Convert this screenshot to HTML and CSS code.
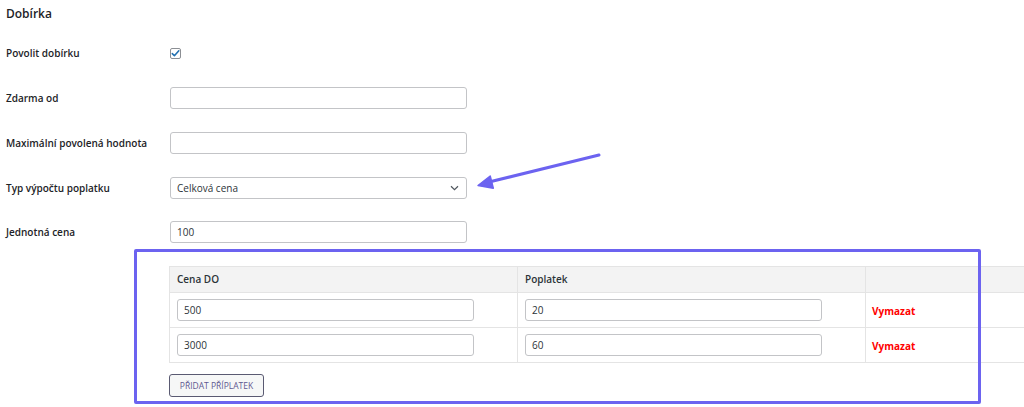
FILE: index.html
```html
<!DOCTYPE html>
<html lang="cs">
<head>
<meta charset="utf-8">
<title>Dobírka</title>
<link rel="stylesheet" href="styles.css">
</head>
<body>
<div class="page">
  <h2 class="title">Dobírka</h2>
  <div class="form">
    <div class="row">
      <label class="label">Povolit dobírku</label>
      <span class="checkbox">
        <svg width="11" height="11" viewBox="0 0 11 11"><path d="M2.3 5.6 L4.4 7.7 L8.8 2.8" fill="none" stroke="#2271b1" stroke-width="1.6" stroke-linecap="round" stroke-linejoin="round"/></svg>
      </span>
    </div>
    <div class="row">
      <label class="label">Zdarma od</label>
      <div class="input"></div>
    </div>
    <div class="row">
      <label class="label">Maximální povolená hodnota</label>
      <div class="input"></div>
    </div>
    <div class="row">
      <label class="label">Typ výpočtu poplatku</label>
      <div class="input select">
        <span>Celková cena</span>
        <svg class="chev" width="9" height="6" viewBox="0 0 9 6"><path d="M1 1.2 L4.5 4.6 L8 1.2" fill="none" stroke="#50575e" stroke-width="1.2"/></svg>
      </div>
    </div>
    <div class="row">
      <label class="label">Jednotná cena</label>
      <div class="input">100</div>
    </div>
  </div>

  <div class="fees">
    <table class="fee-table">
      <thead>
        <tr><th class="c1">Cena DO</th><th class="c2">Poplatek</th><th class="c3"></th></tr>
      </thead>
      <tbody>
        <tr>
          <td><div class="input cell-input">500</div></td>
          <td><div class="input cell-input">20</div></td>
          <td><span class="delete">Vymazat</span></td>
        </tr>
        <tr>
          <td><div class="input cell-input">3000</div></td>
          <td><div class="input cell-input">60</div></td>
          <td><span class="delete">Vymazat</span></td>
        </tr>
      </tbody>
    </table>
    <button class="add-btn">PŘIDAT PŘÍPLATEK</button>
  </div>
</div>

<div class="highlight"></div>
<svg class="arrow" width="1024" height="407" viewBox="0 0 1024 407">
  <path d="M599 155 L489 182" stroke="#6c63f0" stroke-width="3" stroke-linecap="round" fill="none"/>
  <path d="M478 185.5 L490.2 176 L493.3 188.2 Z" fill="#6c63f0" stroke="#6c63f0" stroke-width="1.5" stroke-linejoin="round"/>
</svg>
</body>
</html>
```

FILE: styles.css
```css
* { box-sizing: border-box; }
html, body { margin: 0; padding: 0; background: #fff; }
body {
  font-family: "Open Sans", "Noto Sans", sans-serif;
  color: #1d2327;
  width: 1024px;
  height: 407px;
  overflow: hidden;
  position: relative;
}
.page { padding: 0 0 0 6px; }
.title {
  margin: 0;
  padding-top: 5px;
  height: 31px;
  font-size: 12px;
  font-weight: 600;
  line-height: 18px;
}
.row {
  display: grid;
  grid-template-columns: 164px 297px;
  align-items: center;
  height: 44.75px;
}
.label {
  font-size: 10px;
  font-weight: 600;
  color: #1d2327;
}
.checkbox {
  width: 11px;
  height: 11px;
  border: 1px solid #8c8f94;
  border-radius: 2px;
  display: flex;
  align-items: center;
  justify-content: center;
  background: #fff;
}
.checkbox svg { display: block; margin: -1px; }
.input {
  height: 22px;
  border: 1px solid #c3c4c7;
  border-radius: 3px;
  background: #fff;
  font-size: 10px;
  color: #2c3338;
  padding: 0 6px;
  display: flex;
  align-items: center;
}
.select { justify-content: space-between; padding-right: 7px; }
.chev { display: block; }
.fees {
  margin: 11px 0 0 163px;
}
.fee-table {
  border-collapse: collapse;
  width: 900px;
  table-layout: fixed;
  border: 1px solid #e4e4e4;
}
.fee-table th {
  background: #f3f3f3;
  height: 26px;
  text-align: left;
  font-size: 10px;
  font-weight: 600;
  color: #2c3338;
  padding: 0 7px;
  border: 1px solid #e4e4e4;
}
.c1, .c2 { width: 348px; }
.fee-table td {
  height: 35px;
  padding: 0 44px 0 7px;
  border-top: 1px solid #e4e4e4;
  border-bottom: 1px solid #e4e4e4;
  border-left: 1px solid #e4e4e4;
  vertical-align: middle;
}
.fee-table td:last-child { padding: 0 6px; }
.cell-input { width: 297px; }
.delete {
  color: #f00;
  font-weight: 700;
  font-size: 10px;
  position: relative;
  top: -1px;
}
.add-btn {
  margin-top: 11px;
  height: 23px;
  width: 95px;
  padding: 0;
  border: 1px solid #5a5a72;
  border-radius: 3px;
  background: #f6f7f7;
  color: #5e5890;
  font-family: "Open Sans", "Noto Sans", sans-serif;
  font-size: 8.5px;
  display: block;
}
.highlight {
  position: absolute;
  left: 134px;
  top: 249px;
  width: 847px;
  height: 155px;
  border: 3px solid #6c63f0;
  border-radius: 2px;
  pointer-events: none;
}
.arrow {
  position: absolute;
  left: 0;
  top: 0;
  pointer-events: none;
}
```
